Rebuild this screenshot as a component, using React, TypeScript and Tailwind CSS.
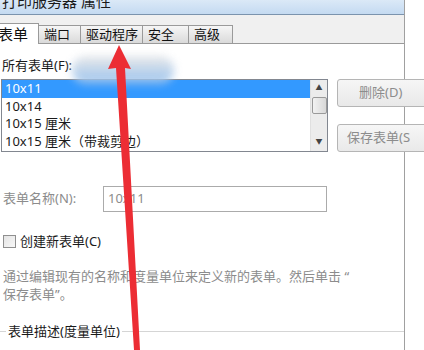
import React from "react";

const FONT = { fontFamily: '"Noto Sans", "Noto Sans CJK SC", sans-serif' };

const TABS = [
    { label: "端口", w: "w-[43px]" },
    { label: "驱动程序", w: "w-[63px]" },
    { label: "安全", w: "w-[47px]" },
    { label: "高级", w: "w-[45px]" },
];
const ROWS = ["10x11", "10x14", "10x15 厘米", "10x15 厘米（带裁剪边）"];

export default function App() {
    return (
        <div className="relative w-[424px] h-[350px] overflow-hidden bg-white" style={FONT}>
            <div className="w-[405px] h-full border-r border-[#a0a0a0] bg-[#f0f0f0] flex flex-col">
                {/* title bar, cut off at the top */}
                <div className="h-[15px] shrink-0 overflow-hidden bg-gradient-to-b from-[#dbe9f7] to-[#c4daf1] border-b border-[#7b93ad] relative">
                    <div className="absolute left-[2px] -top-[9px] text-[15px] leading-[20px] text-[#1a1a1a]">打印服务器 属性</div>
                </div>

                {/* tab strip */}
                <div className="h-[29px] shrink-0 flex items-end border-b border-[#9a9a9a]">
                    <div className="h-[21px] w-[39px] -mb-px bg-white border-r border-t border-[#9a9a9a] text-[15px] leading-[20px] text-[#111] flex items-center relative z-10">
                        <span className="-ml-[2px]">表单</span>
                    </div>
                    <div className="flex items-end">
                        {TABS.map((t) => (
                            <div
                                key={t.label}
                                className={`${t.w} h-[18px] -ml-px border border-b-0 border-[#9a9a9a] bg-gradient-to-b from-[#f6f6f6] to-[#dadada] text-[13px] leading-[17px] text-[#111] flex items-center pl-[5px]`}
                            >
                                {t.label}
                            </div>
                        ))}
                    </div>
                </div>

                {/* page */}
                <div className="flex-1 bg-white relative">
                    <div className="pl-[2px] pt-[12px] text-[13px] leading-[18px] text-[#1a1a1a]">所有表单(F):</div>

                    <div className="flex mt-[5px] ml-px">
                        <div className="w-[327px] h-[73px] shrink-0 border border-[#828790] flex">
                            <div className="flex-1">
                                {ROWS.map((r, i) => (
                                    <div
                                        key={r}
                                        className={`h-[17.7px] pl-[3px] text-[13px] leading-[17px] ${i === 0 ? "bg-[#3399ff] text-white" : "text-[#1a1a1a]"}`}
                                    >
                                        {r}
                                    </div>
                                ))}
                            </div>
                            <div className="w-[17px] bg-[#ececec] border-l border-[#e0e0e0] flex flex-col items-center">
                                <div className="h-[17px] flex items-center justify-center text-[7px] text-[#444]">▲</div>
                                <div className="w-[15px] h-[17px] rounded-[2px] border border-[#9a9a9a] bg-gradient-to-r from-[#f2f2f2] to-[#d8d8d8]" />
                                <div className="flex-1" />
                                <div className="h-[17px] flex items-center justify-center text-[7px] text-[#444]">▼</div>
                            </div>
                        </div>
                        <div className="ml-[9px] flex flex-col gap-[17px] shrink-0 relative z-10">
                            <div className="w-[90px] h-[28px] rounded-[3px] border border-[#b5b5b5] bg-gradient-to-b from-[#f6f6f6] to-[#e9e9e9] text-[13px] text-[#8c8c8c] flex items-center pl-[21px]">
                                删除(D)
                            </div>
                            <div className="w-[90px] h-[28px] rounded-[3px] border border-[#b5b5b5] bg-gradient-to-b from-[#f6f6f6] to-[#e9e9e9] text-[13px] text-[#8c8c8c] flex items-center pl-[9px] whitespace-nowrap">
                                保存表单(S
                            </div>
                        </div>
                    </div>

                    <div className="flex items-center mt-[34px] ml-[3px]">
                        <div className="w-[100px] text-[13px] text-[#8c8c8c]">表单名称(N):</div>
                        <div className="w-[224px] h-[26px] border border-[#ababab] text-[13px] text-[#8c8c8c] flex items-center pl-[4px]">10x11</div>
                    </div>

                    <div className="flex items-center mt-[20px] ml-[3px] gap-[4px]">
                        <div className="w-[13px] h-[13px] border border-[#8f8f8f] bg-gradient-to-br from-[#e4e4e4] to-[#f8f8f8]" />
                        <div className="text-[13px] leading-[18px] text-[#1a1a1a]">创建新表单(C)</div>
                    </div>

                    <div className="mt-[17px] ml-[3px] pr-[10px] text-[13px] leading-[18px] text-[#8c8c8c]">
                        通过编辑现有的名称和度量单位来定义新的表单。然后单击 “
                        <br />
                        保存表单”。
                    </div>

                    <div className="mt-[19px] flex items-center">
                        <div className="w-[6px] border-t border-[#d5d5d5]" />
                        <div className="px-[2px] text-[13px] leading-[18px] text-[#1a1a1a]">表单描述(度量单位)</div>
                        <div className="flex-1 border-t border-[#d5d5d5]" />
                    </div>
                </div>
            </div>

            {/* blurred smudge */}
            <div className="absolute left-[72px] top-[56px] w-[102px] h-[28px] rounded-full bg-gradient-to-b from-[#e6e6e6] to-[#8fbcec] blur-[4px] opacity-90" />

            {/* red arrow annotation */}
            <svg className="absolute left-0 top-0" width="424" height="350" viewBox="0 0 424 350">
                <polygon points="119,45 131,69 125,68 140,350 134,350 116,68 108,69" fill="#ec2d34" />
            </svg>
        </div>
    );
}
